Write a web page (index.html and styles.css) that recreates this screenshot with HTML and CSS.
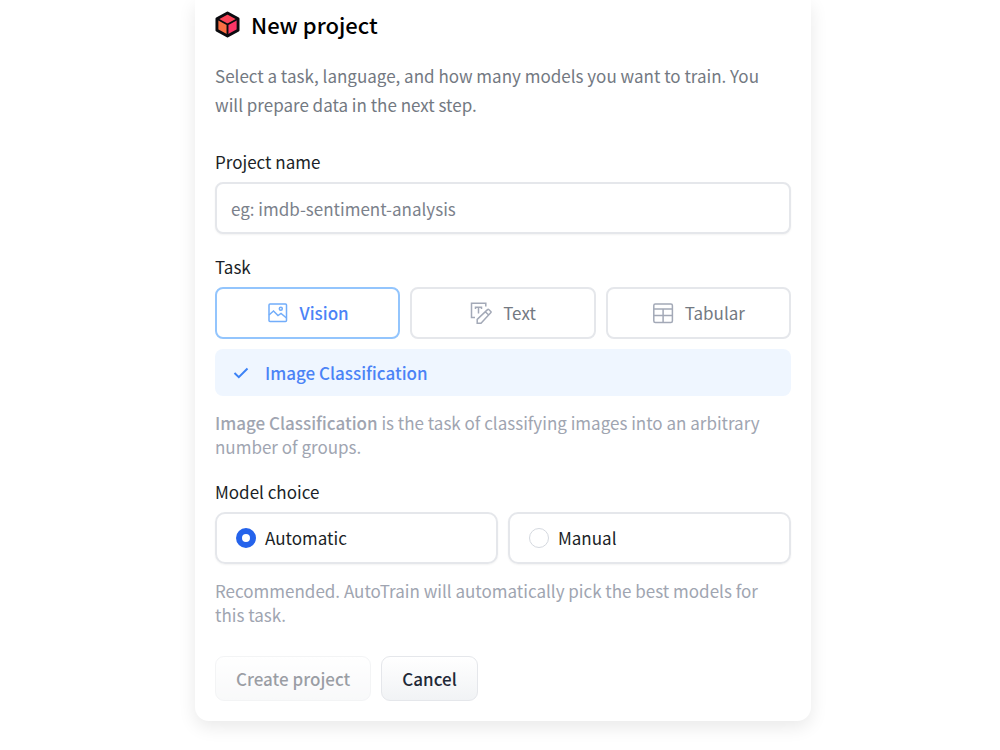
FILE: index.html
```html
<!DOCTYPE html>
<html lang="en">
<head>
    <meta charset="UTF-8">
    <meta name="viewport" content="width=device-width, initial-scale=1.0">
    <title>New project</title>
    <link rel="stylesheet" href="styles.css">
</head>
<body>
    <form class="card">
        <h1 class="title">
            <svg class="logo" viewBox="0 0 26 28" aria-hidden="true">
                <path d="M13 2 24 8 13 14 2 8Z" fill="#fb4458"/>
                <path d="M2 8 13 14V26L2 20Z" fill="#fb6f43"/>
                <path d="M24 8 13 14V26L24 20Z" fill="#fc3566"/>
                <path d="M13 2 24 8V20L13 26 2 20V8Z" fill="none" stroke="#0b0b0f" stroke-width="3" stroke-linejoin="round"/>
                <path d="M2 8 13 14 24 8M13 14V26" fill="none" stroke="#0b0b0f" stroke-width="2"/>
            </svg>
            New project
        </h1>
        <p class="intro">Select a task, language, and how many models you want to train. You will prepare data in the next step.</p>

        <label class="label" for="projectName">Project name</label>
        <input class="text-input" type="text" id="projectName" placeholder="eg: imdb-sentiment-analysis">

        <div class="label" id="taskLabel">Task</div>
        <div class="tasks" role="group" aria-labelledby="taskLabel">
            <button type="button" class="task active">
                <svg class="icon" viewBox="0 0 22 22" aria-hidden="true">
                    <rect x="2" y="2" width="17.5" height="17.5" rx="1"/>
                    <path d="M2 13 6.5 9 11 13.5 14 11.5 19.5 16"/>
                    <circle cx="13.8" cy="6.8" r="1.5"/>
                </svg>
                Vision
            </button>
            <button type="button" class="task">
                <svg class="icon" viewBox="0 0 22 22" aria-hidden="true">
                    <path d="M5 15.5H1.5V1.2H15.8V4.5M5.5 7V5.2H11.5V7M8.5 5.2V11.5"/>
                    <path d="M7.2 21.2V17.4L17.5 7.6Q18.2 7 19 7.7L20.8 9.4Q21.4 10.1 20.7 10.8L11 21.2ZM15.3 9.8 18.7 13"/>
                </svg>
                Text
            </button>
            <button type="button" class="task">
                <svg class="icon" viewBox="0 0 22 22" aria-hidden="true">
                    <rect x="1.8" y="2" width="18.6" height="18.4" rx="1.5"/>
                    <path d="M1.8 7H20.4M1.8 13.5H20.4M11.1 7V20.4"/>
                </svg>
                Tabular
            </button>
        </div>
        <button type="button" class="subtask">
            <svg class="check" viewBox="0 0 16 16" aria-hidden="true">
                <path d="M1.5 8 5.8 12.2 14.5 3.5"/>
            </svg>
            Image Classification
        </button>
        <p class="help"><strong>Image Classification</strong> is the task of classifying images into an arbitrary number of groups.</p>

        <div class="label" id="modelLabel">Model choice</div>
        <div class="choices" role="radiogroup" aria-labelledby="modelLabel">
            <label class="choice">
                <input class="radio" type="radio" name="model" value="automatic" checked>
                Automatic
            </label>
            <label class="choice">
                <input class="radio" type="radio" name="model" value="manual">
                Manual
            </label>
        </div>
        <p class="help">Recommended. AutoTrain will automatically pick the best models for this task.</p>

        <div class="actions">
            <button type="submit" class="btn" disabled>Create project</button>
            <button type="button" class="btn">Cancel</button>
        </div>
    </form>
</body>
</html>
```

FILE: styles.css
```css
* {
    box-sizing: border-box;
}
body {
    margin: 0;
    padding: 0 0 28px 6px;
    background-color: #fff;
    color: #1b1f27;
    font-family: "Noto Sans CJK SC", sans-serif;
    font-size: 17px;
    line-height: 24px;
}
button,
input {
    font: inherit;
    color: inherit;
}
button {
    cursor: pointer;
}
.card {
    max-width: 616px;
    margin: 0 auto;
    padding: 7px 20px 20px;
    border-radius: 0 0 14px 14px;
    box-shadow: 0 6px 18px rgba(0, 0, 0, 0.09);
}
.title {
    display: flex;
    align-items: center;
    gap: 11px;
    margin: 0 0 20px;
    color: #000;
    font-size: 22px;
    font-weight: 500;
    line-height: 34px;
}
.logo {
    width: 25px;
    height: 27px;
}
.intro {
    margin: 0 0 31px;
    padding-right: 16px;
    color: #737982;
    line-height: 29px;
}
.label {
    display: block;
    margin-bottom: 8px;
}
.text-input {
    display: block;
    width: 100%;
    height: 52px;
    margin-bottom: 21px;
    padding: 0 14px;
    border: 2px solid #e5e7eb;
    border-radius: 8px;
    background-color: #fff;
    box-shadow: 0 1px 2px rgba(0, 0, 0, 0.05);
}
.text-input::placeholder {
    color: #7b818b;
    opacity: 1;
}
.tasks {
    display: grid;
    grid-template-columns: repeat(3, 1fr);
    gap: 10px;
    margin-bottom: 10px;
}
.task {
    display: flex;
    align-items: center;
    justify-content: center;
    gap: 11px;
    height: 52px;
    padding: 0;
    border: 2px solid #e5e7eb;
    border-radius: 8px;
    background-color: #fff;
    color: #737982;
}
.task.active {
    border-color: #93c5fd;
    color: #4b83f6;
    font-weight: 500;
}
.icon {
    width: 22px;
    height: 22px;
    fill: none;
    stroke: #a3a9b7;
    stroke-width: 1.5;
}
.active .icon {
    stroke: #72adfa;
}
.subtask {
    display: flex;
    align-items: center;
    gap: 16px;
    width: 100%;
    height: 47px;
    margin-bottom: 15px;
    padding: 0 18px;
    border: 0;
    border-radius: 8px;
    background-color: #eff6ff;
    color: #4b83f6;
    font-weight: 500;
}
.check {
    width: 16px;
    height: 16px;
    fill: none;
    stroke: #3b82f6;
    stroke-width: 2;
}
.help {
    margin: 0 0 21px;
    padding-right: 16px;
    color: #a0a5b1;
}
.help strong {
    font-weight: 500;
}
.choices {
    display: grid;
    grid-template-columns: 1fr 1fr;
    gap: 10px;
    margin-bottom: 15px;
}
.choice {
    display: flex;
    align-items: center;
    gap: 9px;
    height: 52px;
    padding: 0 19px;
    border: 2px solid #e5e7eb;
    border-radius: 10px;
    box-shadow: 0 1px 2px rgba(0, 0, 0, 0.05);
}
.radio {
    appearance: none;
    width: 20px;
    height: 20px;
    margin: 0;
    border: 1px solid #d5d9df;
    border-radius: 50%;
    background-color: #fff;
}
.radio:checked {
    border: 6px solid #2563eb;
}
.actions {
    display: flex;
    gap: 10px;
    margin-top: 29px;
}
.btn {
    height: 45px;
    padding: 0 20px;
    border: 1px solid #e5e7eb;
    border-radius: 9px;
    background: linear-gradient(#fff, #f1f3f5);
    color: #1f2937;
    font-weight: 500;
}
.btn:disabled {
    opacity: 0.45;
    cursor: default;
}
```
